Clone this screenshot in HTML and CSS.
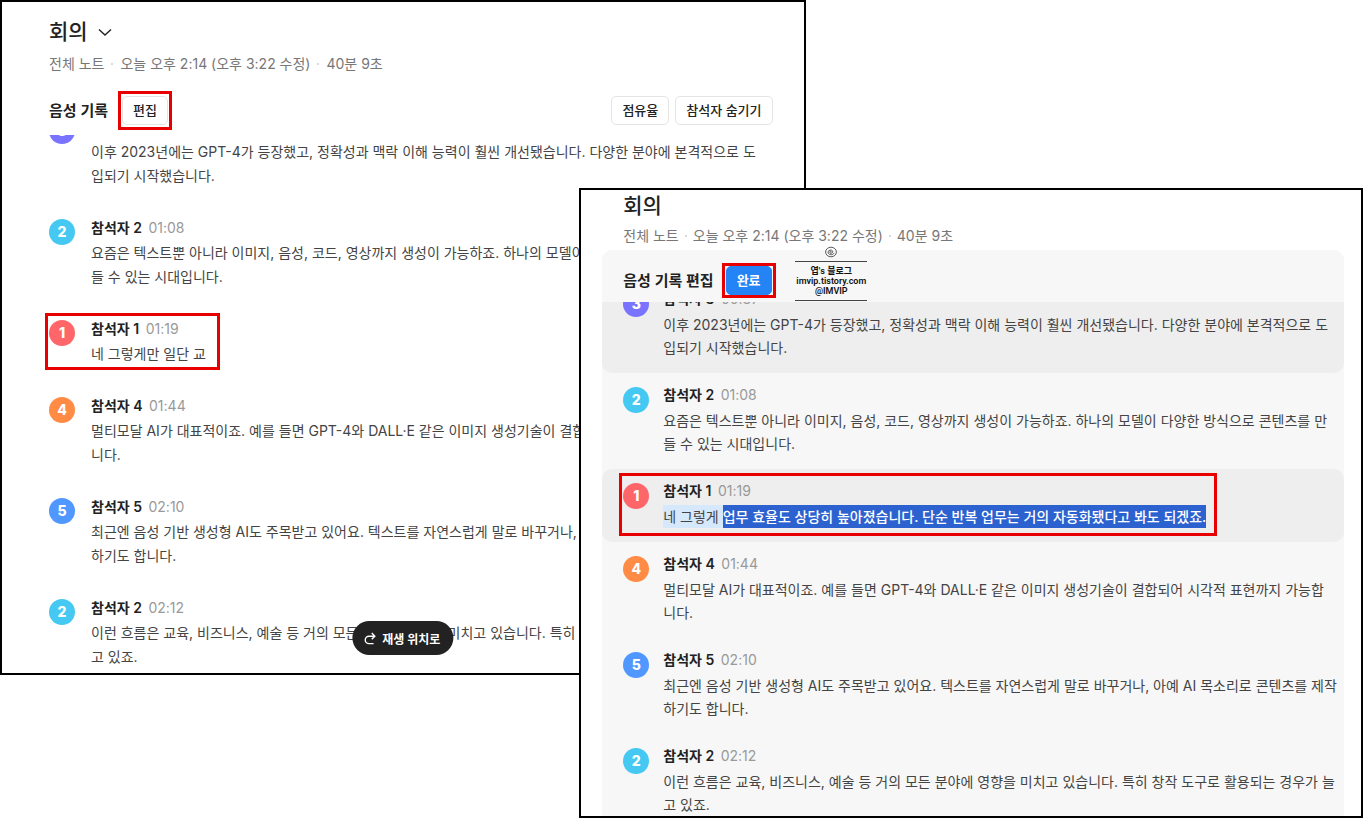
FILE: index.html
```html
<!DOCTYPE html>
<html lang="ko">
<head>
    <meta charset="UTF-8">
    <meta name="viewport" content="width=device-width, initial-scale=1.0">
    <title>회의</title>
    <link rel="stylesheet" href="styles.css">
</head>
<body>

<main class="stage">
    <!-- Note view -->
    <section class="window window-view">
        <header class="note-header">
            <h1>회의
                <svg class="chevron" width="14" height="14" viewBox="0 0 14 14" fill="none" stroke="#222" stroke-width="1.4"><path d="M1 4.5 7 10l6-5.5"/></svg>
            </h1>
            <p class="meta">전체 노트<i></i>오늘 오후 2:14 (오후 3:22 수정)<i></i>40분 9초</p>
        </header>

        <div class="toolbar">
            <h2>음성 기록</h2>
            <span class="callout"><button type="button" class="btn">편집</button></span>
            <div class="toolbar-right">
                <button type="button" class="btn">점유율</button>
                <button type="button" class="btn">참석자 숨기기</button>
            </div>
        </div>

        <div class="transcript">
            <article class="entry">
                <span class="avatar purple">3</span>
                <div class="entry-body">
                    <h3>참석자 3 <time>00:37</time></h3>
                    <p>이후 2023년에는 GPT-4가 등장했고, 정확성과 맥락 이해 능력이 훨씬 개선됐습니다. 다양한 분야에 본격적으로 도<br>입되기 시작했습니다.</p>
                </div>
            </article>
            <article class="entry">
                <span class="avatar cyan">2</span>
                <div class="entry-body">
                    <h3>참석자 2 <time>01:08</time></h3>
                    <p>요즘은 텍스트뿐 아니라 이미지, 음성, 코드, 영상까지 생성이 가능하죠. 하나의 모델이 다양한 방식으로 콘텐츠를 만<br>들 수 있는 시대입니다.</p>
                </div>
            </article>
            <article class="entry marked">
                <span class="avatar red">1</span>
                <div class="entry-body">
                    <h3>참석자 1 <time>01:19</time></h3>
                    <p>네 그렇게만 일단 교</p>
                </div>
            </article>
            <article class="entry">
                <span class="avatar orange">4</span>
                <div class="entry-body">
                    <h3>참석자 4 <time>01:44</time></h3>
                    <p>멀티모달 AI가 대표적이죠. 예를 들면 GPT-4와 DALL·E 같은 이미지 생성기술이 결합되어 시각적 표현까지 가능합<br>니다.</p>
                </div>
            </article>
            <article class="entry">
                <span class="avatar blue">5</span>
                <div class="entry-body">
                    <h3>참석자 5 <time>02:10</time></h3>
                    <p>최근엔 음성 기반 생성형 AI도 주목받고 있어요. 텍스트를 자연스럽게 말로 바꾸거나, 아예 AI 목소리로 콘텐츠를 제작<br>하기도 합니다.</p>
                </div>
            </article>
            <article class="entry">
                <span class="avatar cyan">2</span>
                <div class="entry-body">
                    <h3>참석자 2 <time>02:12</time></h3>
                    <p>이런 흐름은 교육, 비즈니스, 예술 등 거의 모든 분야에 영향을 미치고 있습니다. 특히 창작 도구로 활용되는 경우가 늘<br>고 있죠.</p>
                </div>
            </article>
        </div>

        <button type="button" class="play-position">
            <svg width="13" height="13" viewBox="0 0 14 14" fill="none" stroke="#fff" stroke-width="1.5"><path d="M12 4.5H6a4 4 0 0 0 0 8h5M9 1.2l3.3 3.3L9 7.8"/></svg>
            재생 위치로
        </button>
    </section>

    <!-- Edit mode -->
    <section class="window window-edit">
        <header class="note-header">
            <h1>회의</h1>
            <p class="meta">전체 노트<i></i>오늘 오후 2:14 (오후 3:22 수정)<i></i>40분 9초</p>
        </header>

        <div class="panel">
            <div class="toolbar">
                <h2>음성 기록 편집</h2>
                <span class="callout"><button type="button" class="btn primary">완료</button></span>
                <div class="watermark">
                    <svg width="12" height="12" viewBox="0 0 12 12" fill="none" stroke="#333" stroke-width="0.8"><ellipse cx="6" cy="6" rx="5.4" ry="4.8"/><path d="M6 6.200c.8-.8-.8-1.4-1.200-.3C4.400 7.600 7.400 7.800 7.700 5.900 8 3.600 3.700 3.200 3.100 5.900 2.700 8.700 7.500 9.800 9 7.200"/></svg>
                    <p>엽's 블로그<br>imvip.tistory.com<br>@IMVIP</p>
                </div>
            </div>

            <div class="transcript">
                <article class="entry shaded">
                    <span class="avatar purple">3</span>
                    <div class="entry-body">
                        <h3>참석자 3 <time>00:37</time></h3>
                        <p>이후 2023년에는 GPT-4가 등장했고, 정확성과 맥락 이해 능력이 훨씬 개선됐습니다. 다양한 분야에 본격적으로 도<br>입되기 시작했습니다.</p>
                    </div>
                </article>
                <article class="entry">
                    <span class="avatar cyan">2</span>
                    <div class="entry-body">
                        <h3>참석자 2 <time>01:08</time></h3>
                        <p>요즘은 텍스트뿐 아니라 이미지, 음성, 코드, 영상까지 생성이 가능하죠. 하나의 모델이 다양한 방식으로 콘텐츠를 만<br>들 수 있는 시대입니다.</p>
                    </div>
                </article>
                <article class="entry shaded">
                    <div class="entry-inner marked">
                        <span class="avatar red">1</span>
                        <div class="entry-body">
                            <h3>참석자 1 <time>01:19</time></h3>
                            <p class="editing"><span class="current">네 그렇게 </span><mark>업무 효율도 상당히 높아졌습니다. 단순 반복 업무는 거의 자동화됐다고 봐도 되겠죠.</mark></p>
                        </div>
                    </div>
                </article>
                <article class="entry">
                    <span class="avatar orange">4</span>
                    <div class="entry-body">
                        <h3>참석자 4 <time>01:44</time></h3>
                        <p>멀티모달 AI가 대표적이죠. 예를 들면 GPT-4와 DALL·E 같은 이미지 생성기술이 결합되어 시각적 표현까지 가능합<br>니다.</p>
                    </div>
                </article>
                <article class="entry">
                    <span class="avatar blue">5</span>
                    <div class="entry-body">
                        <h3>참석자 5 <time>02:10</time></h3>
                        <p>최근엔 음성 기반 생성형 AI도 주목받고 있어요. 텍스트를 자연스럽게 말로 바꾸거나, 아예 AI 목소리로 콘텐츠를 제작<br>하기도 합니다.</p>
                    </div>
                </article>
                <article class="entry">
                    <span class="avatar cyan">2</span>
                    <div class="entry-body">
                        <h3>참석자 2 <time>02:12</time></h3>
                        <p>이런 흐름은 교육, 비즈니스, 예술 등 거의 모든 분야에 영향을 미치고 있습니다. 특히 창작 도구로 활용되는 경우가 늘<br>고 있죠.</p>
                    </div>
                </article>
            </div>
        </div>
    </section>
</main>

</body>
</html>
```
FILE: styles.css
```css
* {
    box-sizing: border-box;
}

body {
    margin: 0;
    background: #fff;
    color: #222;
    font-family: Inter, "Noto Sans CJK KR", sans-serif;
    font-size: 14px;
}

h1, h2, h3, p {
    margin: 0;
}

button {
    font-family: inherit;
    cursor: pointer;
}

/* Two overlapping windows share one grid cell */
.stage {
    display: grid;
    grid-template-columns: minmax(0, 1fr);
    align-items: start;
}

.window {
    position: relative;
    grid-area: 1 / 1;
    background: #fff;
    border: 2px solid #000;
    overflow: hidden;
}

.window-view {
    width: 59.1%;
    padding: 15px 31px 0 47px;
}

.window-edit {
    width: 57.5%;
    margin-top: 188px;
    margin-left: auto;
    padding: 1px 17px 0 21px;
}

/* Title and date line */
.note-header h1 {
    display: flex;
    align-items: center;
    gap: 10px;
    font-size: 21px;
    font-weight: 500;
    line-height: 30px;
}

.meta {
    display: flex;
    align-items: center;
    padding-top: 5px;
    color: #777;
    line-height: 24px;
    white-space: nowrap;
}

.meta i {
    width: 2px;
    height: 2px;
    margin: 0 7px;
    border-radius: 50%;
    background: #ccc;
}

.window-edit .note-header {
    padding: 0 21px 2px;
}

.window-edit .meta {
    padding-top: 3px;
}

.window-edit .meta i {
    margin: 0 6px;
}

/* Toolbar */
.toolbar {
    display: flex;
    align-items: center;
    gap: 10px;
}

.window-view .toolbar {
    padding: 15px 0 5px;
}

.toolbar h2 {
    font-size: 15px;
    font-weight: 600;
    line-height: 24px;
    white-space: nowrap;
}

.toolbar-right {
    display: flex;
    gap: 6px;
    margin-left: auto;
}

.btn {
    height: 29px;
    padding: 0 10px 2px;
    border: 1px solid #e4e4e4;
    border-radius: 5px;
    background: #fff;
    color: #222;
    font-size: 13px;
    font-weight: 500;
    white-space: nowrap;
}

.btn.primary {
    border-color: #2483f5;
    background: #2483f5;
    color: #fff;
    font-weight: 700;
}

/* Red highlight boxes */
.callout {
    display: flex;
    padding: 2px 1px;
    border: 3px solid #e80000;
}

.marked {
    position: relative;
}

.marked::after {
    content: "";
    position: absolute;
    inset: -2px -14px -4px -4px;
    border: 3px solid #e80000;
}

/* Transcript, scrolled part way into the first entry */
.transcript {
    overflow: hidden;
}

.entry,
.entry-inner {
    display: flex;
    gap: 16px;
}

.avatar {
    flex: none;
    width: 26px;
    height: 26px;
    margin-top: 5px;
    border-radius: 50%;
    color: #fff;
    font-size: 14px;
    font-weight: 800;
    line-height: 26px;
    text-align: center;
}

.purple { background: #7a73ff; }
.cyan { background: #45c8f2; }
.red { background: #ff6669; }
.orange { background: #ff8b45; }
.blue { background: #5097ff; }

.entry h3 {
    font-size: 14px;
    font-weight: 600;
    line-height: 27px;
}

.entry time {
    margin-left: 3px;
    color: #999;
    font-weight: 400;
}

.entry p {
    color: #444;
    line-height: 24px;
    white-space: nowrap;
}

.window-view .transcript {
    margin: 0 -31px 0 -47px;
    padding: 0 31px 4px 47px;
}

.window-view .entry {
    width: fit-content;
    margin-bottom: 26px;
}

.window-view .entry:first-child {
    margin-top: -22px;
}

.window-view .entry:last-child {
    margin-bottom: 0;
}

/* Editing panel */
.panel {
    border-radius: 10px 10px 0 0;
    background: #f7f7f7;
}

.panel .toolbar {
    position: relative;
    gap: 8px;
    padding: 13px 21px 4px;
}

.panel .callout {
    padding: 0 1px;
}

.panel .entry,
.panel .entry-inner {
    gap: 14px;
}

.panel .entry {
    padding: 10px 21px 14px;
    border-radius: 10px;
}

.panel .entry:first-child {
    margin-top: -25px;
}

.panel .entry:last-child {
    padding-bottom: 0;
}

.panel .shaded {
    background: #eee;
}

.panel .marked::after {
    inset: -6px -11px -8px -4px;
}

.panel .avatar {
    margin-top: 4px;
}

.panel h3 {
    padding-bottom: 2px;
    line-height: 24px;
}

.panel .entry p {
    line-height: 23px;
}

.panel .entry .editing {
    display: flex;
    white-space: pre;
}

.current {
    background: #d6e8fc;
}

mark {
    background: #2c62cf;
    color: #fff;
    font-weight: 500;
}

/* Blog mark over the panel header */
.watermark {
    position: absolute;
    top: -4px;
    left: 193px;
    display: flex;
    flex-direction: column;
    align-items: center;
    gap: 3px;
    width: 72px;
}

.watermark p {
    width: 100%;
    padding: 4px 0;
    border: solid #444;
    border-width: 1px 0;
    color: #111;
    font-family: Roboto, "Noto Sans CJK KR", sans-serif;
    font-size: 9px;
    font-weight: 600;
    line-height: 10px;
    text-align: center;
    white-space: nowrap;
}

/* Floating playback button */
.play-position {
    position: absolute;
    bottom: 18px;
    left: 50%;
    transform: translateX(-50%);
    display: flex;
    align-items: center;
    gap: 6px;
    height: 34px;
    padding: 0 13px 0 11px;
    border: 0;
    border-radius: 17px;
    background: #222;
    color: #fff;
    font-size: 12px;
    font-weight: 600;
    white-space: nowrap;
}
```
